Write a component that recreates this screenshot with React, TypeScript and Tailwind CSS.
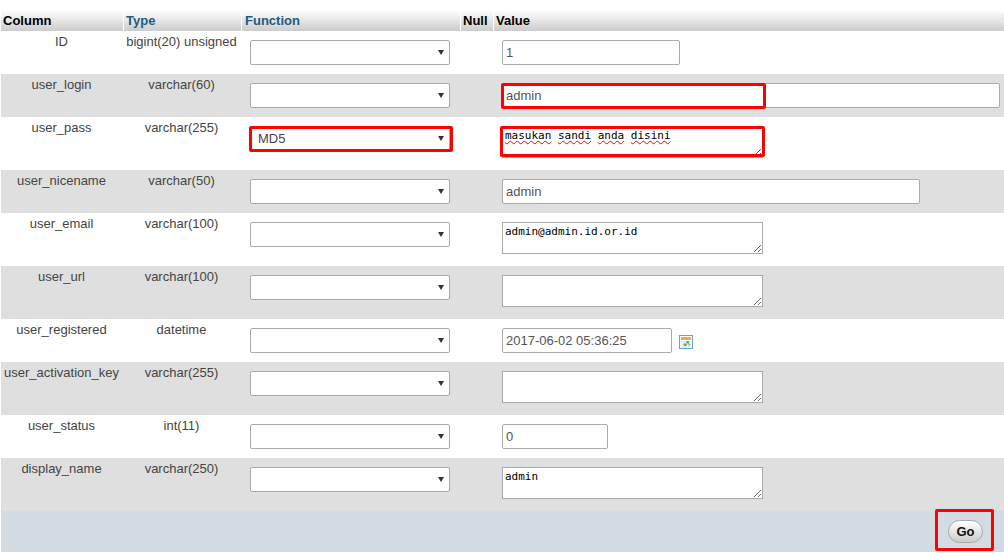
const rows = [
  { name: 'ID', type: 'bigint(20) unsigned', tall: false, kind: 'short', value: '1' },
  { name: 'user_login', type: 'varchar(60)', tall: false, kind: 'full', value: 'admin', box: 'login' },
  { name: 'user_pass', type: 'varchar(255)', tall: true, kind: 'pass', value: '', fn: 'MD5' },
  { name: 'user_nicename', type: 'varchar(50)', tall: false, kind: 'wide', value: 'admin' },
  { name: 'user_email', type: 'varchar(100)', tall: true, kind: 'area', value: 'admin@admin.id.or.id' },
  { name: 'user_url', type: 'varchar(100)', tall: true, kind: 'area', value: '' },
  { name: 'user_registered', type: 'datetime', tall: false, kind: 'date', value: '2017-06-02 05:36:25' },
  { name: 'user_activation_key', type: 'varchar(255)', tall: true, kind: 'area', value: '' },
  { name: 'user_status', type: 'int(11)', tall: false, kind: 'num', value: '0' },
  { name: 'display_name', type: 'varchar(250)', tall: true, kind: 'area', value: 'admin' },
];

const inputClass =
  'h-[25px] rounded-[2px] border border-[#aaa] bg-white px-[3px] text-[13px] text-[#555] outline-none';

function CalendarIcon() {
  return (
    <svg width="14" height="14" viewBox="0 0 14 14" className="ml-[7px] mt-[7px]">
      <rect x="0.5" y="0.5" width="13" height="13" fill="#fbfdff" stroke="#6f9fd8" />
      <rect x="2" y="2" width="10" height="3" fill="#f2a65a" />
      <path d="M2 7h10M2 9.5h10M2 12h10M4.5 6v6.5M7 6v6.5M9.5 6v6.5" stroke="#c9d2d8" strokeWidth="0.6" />
      <rect x="7.5" y="6" width="2.5" height="2.5" fill="#5aa85a" />
      <rect x="5" y="8.5" width="2.5" height="2.5" fill="#5aa85a" />
      <rect x="9.5" y="8.5" width="2" height="2" fill="#8cc48c" />
    </svg>
  );
}

function AreaField({ value }: { value: string }) {
  return (
    <textarea
      readOnly
      spellCheck={false}
      defaultValue={value}
      className="block h-[32px] w-[261px] resize rounded-none border border-[#aaa] bg-white px-[2px] py-[2px] font-['DejaVu_Sans_Mono',monospace] text-[11px] leading-[13px] text-black outline-none"
    />
  );
}

function ValueCell({ kind, value }: { kind: string; value: string }) {
  if (kind === 'short') return <input readOnly value={value} className={`${inputClass} w-[178px]`} />;
  if (kind === 'num') return <input readOnly value={value} className={`${inputClass} w-[106px]`} />;
  if (kind === 'wide') return <input readOnly value={value} className={`${inputClass} w-[418px]`} />;
  if (kind === 'full')
    return (
      <div className="relative w-[498px]">
        <input readOnly value={value} className={`${inputClass} w-full`} />
        <div className="absolute left-[-1px] top-0 h-[26px] w-[265px] rounded-[2px] border-[3px] border-[#f00]" />
      </div>
    );
  if (kind === 'date')
    return (
      <div className="flex items-start">
        <input readOnly value={value} className={`${inputClass} w-[170px]`} />
        <CalendarIcon />
      </div>
    );
  if (kind === 'pass')
    return (
      <div className="relative w-[261px]">
        <AreaField value="" />
        <div className="pointer-events-none absolute left-[3px] top-[3px] flex gap-[6.6px] font-['DejaVu_Sans_Mono',monospace] text-[11px] leading-[13px] text-black">
          {['masukan', 'sandi', 'anda', 'disini'].map((word) => (
            <span key={word} className="underline decoration-[#f00] decoration-wavy decoration-1 underline-offset-1">
              {word}
            </span>
          ))}
        </div>
        <div className="absolute left-[-2px] top-0 h-[31px] w-[265px] rounded-[2px] border-[3px] border-[#f00]" />
      </div>
    );
  return <AreaField value={value} />;
}

export default function App() {
  return (
    <div className="h-[556px] w-[1004px] overflow-hidden bg-white pl-px pt-[10px] font-['Liberation_Sans',Arial,sans-serif] text-[13px] text-[#444]">
      <div className="grid h-[21px] grid-cols-[123px_118px_219px_33px_1fr] font-bold text-black">
        {['Column', 'Type', 'Function', 'Null', 'Value'].map((label) => (
          <div
            key={label}
            className={`border-r border-white bg-gradient-to-b from-white to-[#ccc] pt-[3px] leading-[15px] last:border-r-0 ${
              label === 'Function' ? 'pl-[3px]' : 'pl-[2px]'
            } ${label === 'Type' || label === 'Function' ? 'text-[#235a81]' : ''}`}
          >
            {label}
          </div>
        ))}
      </div>

      {rows.map((row, i) => (
        <div
          key={row.name}
          className={`grid grid-cols-[123px_118px_219px_33px_1fr] ${row.tall ? 'h-[53px]' : 'h-[43px]'} ${
            i % 2 === 1 ? 'bg-[#dfdfdf]' : 'bg-white'
          }`}
        >
          <div className="pr-[2px] pt-[3px] text-center leading-[15px]">{row.name}</div>
          <div className="pr-[3px] pt-[3px] text-center leading-[15px]">{row.type}</div>
          <div className="pl-[8px] pt-[9px]">
            <div className="relative w-[200px]">
              <select
                defaultValue={row.fn ?? ''}
                className="block h-[25px] w-full appearance-none rounded-[2px] border border-[#aaa] bg-white pl-[7px] text-[13px] text-[#444] outline-none"
              >
                <option value=""></option>
                <option value="MD5">MD5</option>
              </select>
              <svg width="6" height="5" viewBox="0 0 6 5" className="pointer-events-none absolute left-[188px] top-[10px]">
                <path d="M0 0h6L3 5z" fill="#333" />
              </svg>
              {row.fn && (
                <div className="absolute left-[-1px] top-0 h-[26px] w-[204px] rounded-[2px] border-[3px] border-[#f00]" />
              )}
            </div>
          </div>
          <div />
          <div className="pl-[8px] pt-[9px]">
            <ValueCell kind={row.kind} value={row.value} />
          </div>
        </div>
      ))}

      <div className="flex h-[41px] items-start justify-end bg-[#d3dce3] pr-[21px] pt-[9px]">
        <div className="relative">
          <button className="h-[23px] w-[35px] rounded-full border border-[#aaa] bg-gradient-to-b from-white to-[#ccc] text-[13px] font-bold text-[#111]">
            Go
          </button>
          <div className="absolute left-[-13px] top-[-11px] h-[42px] w-[59px] rounded-[2px] border-[3px] border-[#f00]" />
        </div>
      </div>
    </div>
  );
}
